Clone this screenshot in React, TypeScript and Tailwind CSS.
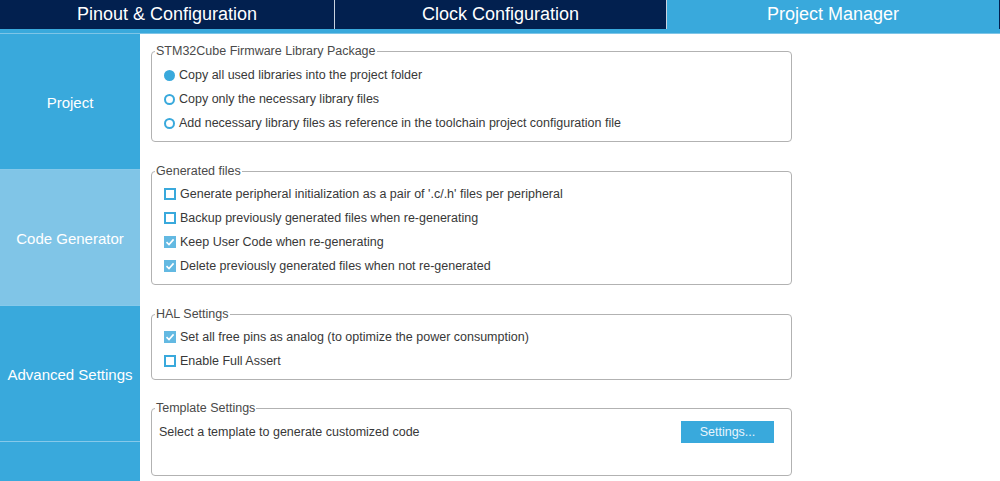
import React from 'react';

const BLUE = 'bg-[#39a9dc]';

function Radio({ checked }: { checked?: boolean }) {
  return checked ? (
    <span className="w-[11px] h-[11px] rounded-full bg-[#39a9dc] shrink-0" />
  ) : (
    <span className="w-[11px] h-[11px] rounded-full border-2 border-[#39a9dc] bg-white shrink-0" />
  );
}

function Check({ checked }: { checked?: boolean }) {
  if (!checked) {
    return <span className="w-[12px] h-[12px] border-2 border-[#39a9dc] bg-white shrink-0" />;
  }
  return (
    <span className="w-[12px] h-[12px] bg-[#63b9e2] shrink-0 flex items-center justify-center">
      <svg viewBox="0 0 12 12" className="w-[12px] h-[12px]">
        <path d="M2.5 6.2 L5 8.6 L9.6 3.4" fill="none" stroke="white" strokeWidth="1.6" />
      </svg>
    </span>
  );
}

function Group({ title, children, className }: { title: string; children: React.ReactNode; className?: string }) {
  return (
    <fieldset className={`w-[641px] ml-[11px] border border-[#b2b2b2] rounded-[4px] ${className ?? ''}`}>
      <legend className="ml-[3px] px-[1px] text-[12.5px] leading-[14px] text-[#4a4a4a]">{title}</legend>
      {children}
    </fieldset>
  );
}

function Row({ icon, label }: { icon: React.ReactNode; label: string }) {
  return (
    <div className="flex items-center h-[24px] pl-[12px] gap-[4px] text-[12.5px] text-[#383838]">
      {icon}
      <span>{label}</span>
    </div>
  );
}

export default function App() {
  const side = [
    { label: 'Project', light: false },
    { label: 'Code Generator', light: true },
    { label: 'Advanced Settings', light: false },
  ];

  return (
    <div className="w-[1000px] h-[481px] overflow-hidden bg-white font-['Liberation_Sans',Arial,sans-serif] flex flex-col">
      {/* Top tabs */}
      <div className="flex h-[29px] bg-[#02204f] shrink-0 text-[18px] text-white">
        <div className="w-[335px] flex items-center justify-center border-r border-[#c9d2df]">Pinout &amp; Configuration</div>
        <div className="w-[332px] flex items-center justify-center border-r border-[#c9d2df]">Clock Configuration</div>
        <div className={`w-[332px] flex items-center justify-center ${BLUE}`}>Project Manager</div>
      </div>
      <div className={`h-[5px] ${BLUE} border-b border-[#7ec5e7] shrink-0`} />

      <div className="flex flex-1 min-h-0">
        {/* Sidebar */}
        <div className={`w-[140px] ${BLUE} flex flex-col shrink-0`}>
          {side.map((s) => (
            <div
              key={s.label}
              className={`h-[136px] pt-[4px] flex items-center justify-center border-b border-[#86c9ea] text-[15px] text-white ${
                s.light ? 'bg-[#80c5e7]' : ''
              }`}
            >
              {s.label}
            </div>
          ))}
        </div>

        {/* Content */}
        <div className="flex-1 flex flex-col pt-[10px]">
          <Group title="STM32Cube Firmware Library Package" className="pt-[5px] pb-[6px]">
            <Row icon={<Radio checked />} label="Copy all used libraries into the project folder" />
            <Row icon={<Radio />} label="Copy only the necessary library files" />
            <Row icon={<Radio />} label="Add necessary library files as reference in the toolchain project configuration file" />
          </Group>

          <Group title="Generated files" className="mt-[22px] pt-[4px] pb-[6px]">
            <Row icon={<Check />} label="Generate peripheral initialization as a pair of '.c/.h' files per peripheral" />
            <Row icon={<Check />} label="Backup previously generated files when re-generating" />
            <Row icon={<Check checked />} label="Keep User Code when re-generating" />
            <Row icon={<Check checked />} label="Delete previously generated files when not re-generated" />
          </Group>

          <Group title="HAL Settings" className="mt-[22px] pt-[4px] pb-[6px]">
            <Row icon={<Check checked />} label="Set all free pins as analog (to optimize the power consumption)" />
            <Row icon={<Check />} label="Enable Full Assert" />
          </Group>

          <Group title="Template Settings" className="mt-[21px] pt-[5px] pb-[31px]">
            <div className="flex items-center justify-between h-[24px] pl-[7px] pr-[17px] text-[12.5px] text-[#383838]">
              <span>Select a template to generate customized code</span>
              <button className={`w-[93px] h-[22px] ${BLUE} text-[12.5px] text-[#e8f5fc]`}>Settings...</button>
            </div>
          </Group>
        </div>
      </div>
    </div>
  );
}
